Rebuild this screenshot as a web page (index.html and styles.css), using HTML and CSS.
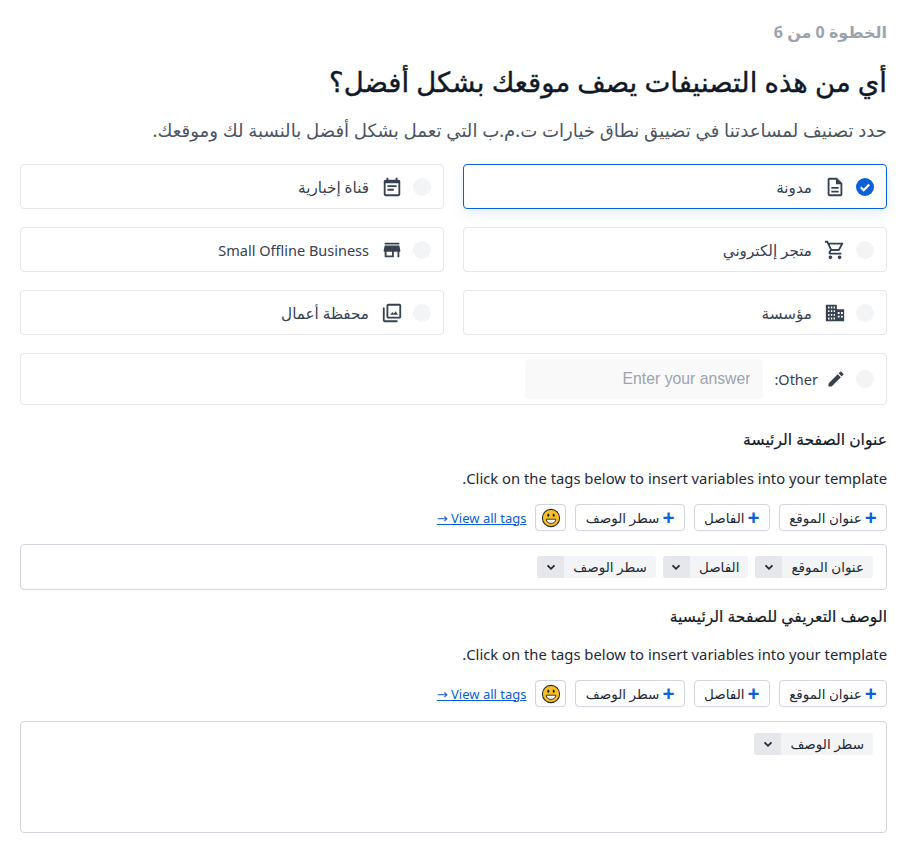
FILE: index.html
```html
<!DOCTYPE html>
<html lang="ar" dir="rtl">
<head>
  <meta charset="UTF-8" />
  <title>Site type</title>
  <link rel="stylesheet" href="styles.css">
</head>
<body>
  <main class="wizard">
    <div class="step">الخطوة 0 من 6</div>
    <h1>أي من هذه التصنيفات يصف موقعك بشكل أفضل؟</h1>
    <p class="lead">حدد تصنيف لمساعدتنا في تضييق نطاق خيارات ت.م.ب التي تعمل بشكل أفضل بالنسبة لك وموقعك.</p>

    <section class="options">
      <label class="option selected">
        <span class="radio"><svg viewBox="0 0 18 18"><path d="M4.800 9.300l2.900 2.900 5.500-5.600" fill="none" stroke="#fff" stroke-width="2.200"/></svg></span>
        <svg class="icon" viewBox="0 0 24 24"><path d="M14 2H6c-1.100 0-2 .9-2 2v16c0 1.100.9 2 2 2h12c1.100 0 2-.9 2-2V8l-6-6zm4 18H6V4h7v5h5v11zM8 12h8v2H8v-2zm0 4h8v2H8v-2z"/></svg>
        <span>مدونة</span>
      </label>
      <label class="option">
        <span class="radio"></span>
        <svg class="icon" viewBox="0 0 24 24"><path d="M18 4V2h-2v2H8V2H6v2H5c-1.100 0-2 .9-2 2v14c0 1.100.9 2 2 2h14c1.100 0 2-.9 2-2V6c0-1.100-.9-2-2-2h-1zm1 16H5V8h14v12zM7 10h10v2H7v-2zm0 4h7v2H7v-2z"/></svg>
        <span>قناة إخبارية</span>
      </label>
      <label class="option">
        <span class="radio"></span>
        <svg class="icon" viewBox="0 0 24 24"><path d="M15.550 13c.750 0 1.410-.410 1.750-1.030l3.580-6.490A.996.996 0 0 0 20.010 4H5.210l-.94-2H1v2h2l3.600 7.590-1.350 2.440C4.520 15.370 5.480 17 7 17h12v-2H7l1.100-2h7.450zM6.160 6h12.150l-2.760 5H8.530L6.160 6zM7 18c-1.100 0-1.990.900-1.990 2S5.900 22 7 22s2-.900 2-2-.900-2-2-2zm10 0c-1.100 0-1.990.900-1.990 2s.890 2 1.990 2 2-.900 2-2-.900-2-2-2z"/></svg>
        <span>متجر إلكتروني</span>
      </label>
      <label class="option">
        <span class="radio"></span>
        <svg class="icon" viewBox="0 0 24 24"><path d="M20 4H4v2h16V4zm1 10v-2l-1-5H4l-1 5v2h1v6h10v-6h4v6h2v-6h1zm-9 4H6v-4h6v4z"/></svg>
        <span class="latin">Small Offline Business</span>
      </label>
      <label class="option">
        <span class="radio"></span>
        <svg class="icon" viewBox="0 0 24 24"><path fill-rule="evenodd" d="M2 21V3h12v5h8v13H2zM4.500 5v2h1.500V5zm3 0v2H9V5zm3 0v2H12V5zM4.500 9v2h1.500V9zm3 0v2H9V9zm3 0v2H12V9zM4.500 13v2h1.500v-2zm3 0v2H9v-2zm3 0v2H12v-2zM4.500 17v2h1.500v-2zm3 0v2H9v-2zm3 0v2H12v-2zM15 11v2h2v-2zm3.500 0v2h2v-2zM15 15v2h2v-2zm3.500 0v2h2v-2z"/></svg>
        <span>مؤسسة</span>
      </label>
      <label class="option">
        <span class="radio"></span>
        <svg class="icon" viewBox="0 0 24 24"><path d="M20 4v12H8V4h12m0-2H8c-1.100 0-2 .9-2 2v12c0 1.100.9 2 2 2h12c1.100 0 2-.9 2-2V4c0-1.100-.9-2-2-2zM4 6H2v14c0 1.100.9 2 2 2h14v-2H4V6zm6 8l2.500-3 1.500 1.800 2-2.800 2.500 4H10z"/></svg>
        <span>محفظة أعمال</span>
      </label>
      <div class="option other">
        <span class="radio"></span>
        <svg class="icon small" viewBox="0 0 24 24"><path d="M3 17.250V21h3.750L17.810 9.940l-3.750-3.750L3 17.250zM20.710 7.040a.996.996 0 0 0 0-1.410l-2.340-2.340a.996.996 0 0 0-1.410 0l-1.830 1.830 3.750 3.750 1.830-1.830z"/></svg>
        <span class="latin">Other:</span>
        <input class="answer" type="text" placeholder="Enter your answer">
      </div>
    </section>

    <section class="field">
      <h2>عنوان الصفحة الرئيسة</h2>
      <p class="hint">Click on the tags below to insert variables into your template.</p>
      <div class="tag-buttons">
        <button class="tag-btn"><b>+</b>عنوان الموقع</button>
        <button class="tag-btn"><b>+</b>الفاصل</button>
        <button class="tag-btn"><b>+</b>سطر الوصف</button>
        <button class="emoji-btn"><svg viewBox="0 0 20 20"><circle cx="10" cy="10" r="8.600" fill="#fbbf24" stroke="#2b2b2b" stroke-width="1.100"/><ellipse cx="7.300" cy="7.200" rx="1" ry="1.600" fill="#222"/><ellipse cx="12.700" cy="7.200" rx="1" ry="1.600" fill="#222"/><path d="M5.200 11.200h9.600c0 2.600-2.100 4.200-4.800 4.200s-4.800-1.600-4.800-4.200z" fill="#fff" stroke="#222" stroke-width="0.900"/></svg></button>
        <a class="view-all" href="#">View all tags →</a>
      </div>
      <div class="editor">
        <span class="chip"><span>عنوان الموقع</span><i><svg viewBox="0 0 12 12"><path d="M2.500 4.300L6 7.800l3.500-3.500" /></svg></i></span>
        <span class="chip"><span>الفاصل</span><i><svg viewBox="0 0 12 12"><path d="M2.500 4.300L6 7.800l3.500-3.500" /></svg></i></span>
        <span class="chip"><span>سطر الوصف</span><i><svg viewBox="0 0 12 12"><path d="M2.500 4.300L6 7.800l3.500-3.500" /></svg></i></span>
      </div>
    </section>

    <section class="field second">
      <h2>الوصف التعريفي للصفحة الرئيسية</h2>
      <p class="hint">Click on the tags below to insert variables into your template.</p>
      <div class="tag-buttons">
        <button class="tag-btn"><b>+</b>عنوان الموقع</button>
        <button class="tag-btn"><b>+</b>الفاصل</button>
        <button class="tag-btn"><b>+</b>سطر الوصف</button>
        <button class="emoji-btn"><svg viewBox="0 0 20 20"><circle cx="10" cy="10" r="8.600" fill="#fbbf24" stroke="#2b2b2b" stroke-width="1.100"/><ellipse cx="7.300" cy="7.200" rx="1" ry="1.600" fill="#222"/><ellipse cx="12.700" cy="7.200" rx="1" ry="1.600" fill="#222"/><path d="M5.200 11.200h9.600c0 2.600-2.100 4.200-4.800 4.200s-4.800-1.600-4.800-4.200z" fill="#fff" stroke="#222" stroke-width="0.900"/></svg></button>
        <a class="view-all" href="#">View all tags →</a>
      </div>
      <div class="editor tall">
        <span class="chip"><span>سطر الوصف</span><i><svg viewBox="0 0 12 12"><path d="M2.500 4.300L6 7.800l3.500-3.500" /></svg></i></span>
      </div>
    </section>
  </main>
</body>
</html>
```

FILE: styles.css
```css
body {
  margin: 0;
  background: #fff;
  color: #111827;
  font-family: "Noto Sans", "DejaVu Sans", sans-serif;
}

.wizard {
  padding: 20px 34px 15px 20px;
}

.step {
  font-size: 16px;
  line-height: 24px;
  font-weight: 700;
  color: #9ca3af;
}

h1 {
  margin: 20px 0 0;
  font-size: 27.500px;
  line-height: 36px;
  font-weight: 400;
  -webkit-text-stroke: 0.4px #111827;
  color: #111827;
}

.lead {
  margin: 18px 0 0;
  font-size: 18.150px;
  line-height: 24px;
  color: #4b5563;
}

.options {
  display: grid;
  grid-template-columns: 1fr 1fr;
  gap: 18px 19px;
  margin-top: 22px;
}

.option {
  display: flex;
  align-items: center;
  height: 45px;
  box-sizing: border-box;
  padding: 0 12px;
  border: 1px solid #e5e7eb;
  border-radius: 4px;
  font-size: 15.200px;
  color: #374151;
}

.latin {
  font-size: 14.500px;
}

.option.selected {
  border-color: #0b5fdb;
  box-shadow: 0 4px 12px rgba(11, 95, 219, 0.12);
}

.radio {
  width: 18px;
  height: 18px;
  border-radius: 50%;
  background: #f3f4f6;
  flex: none;
  margin-left: 10px;
}

.selected .radio {
  background: #0b5fdb;
}

.radio svg {
  display: block;
}

.icon {
  width: 22px;
  height: 22px;
  flex: none;
  margin-left: 12px;
  fill: #374151;
}

.icon.small {
  width: 20px;
  height: 20px;
  margin-left: 8px;
}

.other {
  grid-column: 1 / -1;
  height: 52px;
}

.answer {
  width: 238px;
  height: 40px;
  box-sizing: border-box;
  margin-right: 11px;
  padding: 0 13px;
  border: 0;
  border-radius: 4px;
  background: #f9f9f9;
  font-family: "Liberation Sans", sans-serif;
  font-size: 15.750px;
  text-align: right;
}

.answer::placeholder {
  color: #9ca3af;
}

.field {
  margin-top: 22px;
}

.field.second {
  margin-top: 14px;
}

h2 {
  margin: 0;
  font-size: 15.600px;
  line-height: 24px;
  font-weight: 400;
  -webkit-text-stroke: 0.2px #111827;
  color: #111827;
}

.hint {
  margin: 15px 0 0;
  font-size: 14.800px;
  line-height: 24px;
  color: #1f2937;
}

.second .hint {
  margin-top: 14px;
}

.tag-buttons {
  display: flex;
  align-items: center;
  gap: 9px;
  margin-top: 14px;
}

.tag-btn, .emoji-btn {
  height: 27px;
  box-sizing: border-box;
  border: 1px solid #d1d5db;
  border-radius: 4px;
  background: #fff;
  font-family: inherit;
  font-size: 13.500px;
  color: #1f2937;
  padding: 0 9.300px;
  display: flex;
  align-items: center;
}

.tag-btn b {
  color: #0b5fdb;
  font-size: 21px;
  line-height: 1;
  margin-left: 3px;
}

.emoji-btn {
  width: 31px;
  padding: 0;
  justify-content: center;
}

.emoji-btn svg {
  width: 20px;
  height: 20px;
}

.view-all {
  font-size: 13px;
  color: #0b5fdb;
}

.editor {
  display: flex;
  align-items: flex-start;
  gap: 7px;
  margin-top: 13px;
  height: 46px;
  box-sizing: border-box;
  padding: 11px 13px;
  border: 1px solid #d1d5db;
  border-radius: 4px;
}

.second .editor {
  margin-top: 14px;
}

.editor.tall {
  height: 112px;
}

.chip {
  display: flex;
  height: 22px;
  border-radius: 3px;
  overflow: hidden;
  background: #f3f4f6;
  font-size: 13.500px;
  line-height: 22px;
  color: #1f2937;
}

.chip span {
  padding: 0 9px;
}

.chip i {
  display: flex;
  align-items: center;
  justify-content: center;
  width: 27px;
  background: #e5e7eb;
}

.chip svg {
  width: 12px;
  height: 12px;
  fill: none;
  stroke: #1f2937;
  stroke-width: 1.800;
}
```
